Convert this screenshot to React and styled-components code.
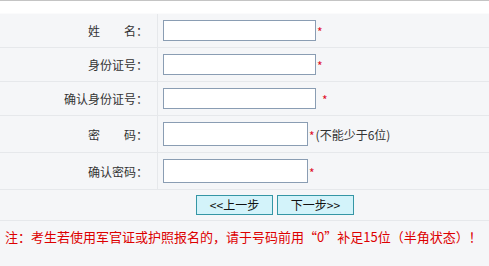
import React from 'react';
import styled, { createGlobalStyle } from 'styled-components';

const GlobalStyle = createGlobalStyle`
  html, body {
    margin: 0;
    padding: 0;
    background: #ffffff;
    font-family: "Noto Sans CJK SC", "Liberation Sans", sans-serif;
    font-size: 12px;
  }
  *, *::before, *::after {
    box-sizing: border-box;
  }
`;

const Page = styled.div`
  width: 489px;
  height: 266px;
  border-top: 1px solid #c4c4c4;
  padding-top: 12px;
  display: flex;
  flex-direction: column;
  overflow: hidden;
`;

const Panel = styled.div`
  flex: 1;
  background: #f5f6f8;
  border-top: 1px solid #fbfbfc;
  display: flex;
  flex-direction: column;
`;

const Row = styled.div`
  display: grid;
  grid-template-columns: 158px 1fr;
  height: ${(p) => p.h}px;
  border-bottom: 1px solid #e6e8eb;
`;

const Label = styled.div`
  display: flex;
  align-items: center;
  justify-content: flex-end;
  padding-right: 9px;
  border-right: 1px solid #e6e8eb;
  color: #333333;
  white-space: pre;
`;

const Field = styled.div`
  display: flex;
  align-items: center;
  padding-left: 5px;
`;

const Input = styled.input`
  width: ${(p) => p.w}px;
  height: ${(p) => p.hgt}px;
  margin: 0;
  padding: 0 3px;
  border: 1px solid #8a9db3;
  background: #ffffff;
  outline: none;
`;

const Star = styled.span`
  color: #e0102a;
  font-size: 12px;
  margin-left: ${(p) => p.gap || 1}px;
  line-height: 12px;
  padding-top: 3px;
`;

const Hint = styled.span`
  color: #333333;
  margin-left: 1px;
`;

const ButtonRow = styled.div`
  display: flex;
  align-items: center;
  gap: 4px;
  height: 31px;
  padding-left: 196px;
  border-bottom: 1px solid #e6e8eb;
`;

const StepButton = styled.button`
  width: 77px;
  height: 20px;
  margin: 0;
  padding: 0;
  background: #d3f3fa;
  border: 1px solid #3596a5;
  color: #111111;
  font-family: inherit;
  font-size: 12px;
  line-height: 18px;
  cursor: pointer;
`;

const Note = styled.div`
  padding: 6px 0 0 5px;
  color: #dd0000;
  font-size: 13px;
  white-space: nowrap;
`;

const fields = [
  { label: '姓　　名：', h: 34, w: 153, ih: 21, gap: 1 },
  { label: '身份证号：', h: 34, w: 153, ih: 21, gap: 1 },
  { label: '确认身份证号：', h: 34, w: 153, ih: 21, gap: 6 },
  { label: '密　　码：', h: 37, w: 145, ih: 24, gap: 1, hint: '(不能少于6位)', type: 'password' },
  { label: '确认密码：', h: 37, w: 145, ih: 24, gap: 1, type: 'password' },
];

export default function App() {
  return (
    <>
      <GlobalStyle />
      <Page>
        <Panel>
          {fields.map((f) => (
            <Row key={f.label} h={f.h}>
              <Label>{f.label}</Label>
              <Field>
                <Input w={f.w} hgt={f.ih} type={f.type || 'text'} />
                <Star gap={f.gap}>*</Star>
                {f.hint && <Hint>{f.hint}</Hint>}
              </Field>
            </Row>
          ))}
          <ButtonRow>
            <StepButton>&lt;&lt;上一步</StepButton>
            <StepButton>下一步&gt;&gt;</StepButton>
          </ButtonRow>
          <Note>注：考生若使用军官证或护照报名的，请于号码前用“0”补足15位（半角状态）！</Note>
        </Panel>
      </Page>
    </>
  );
}
